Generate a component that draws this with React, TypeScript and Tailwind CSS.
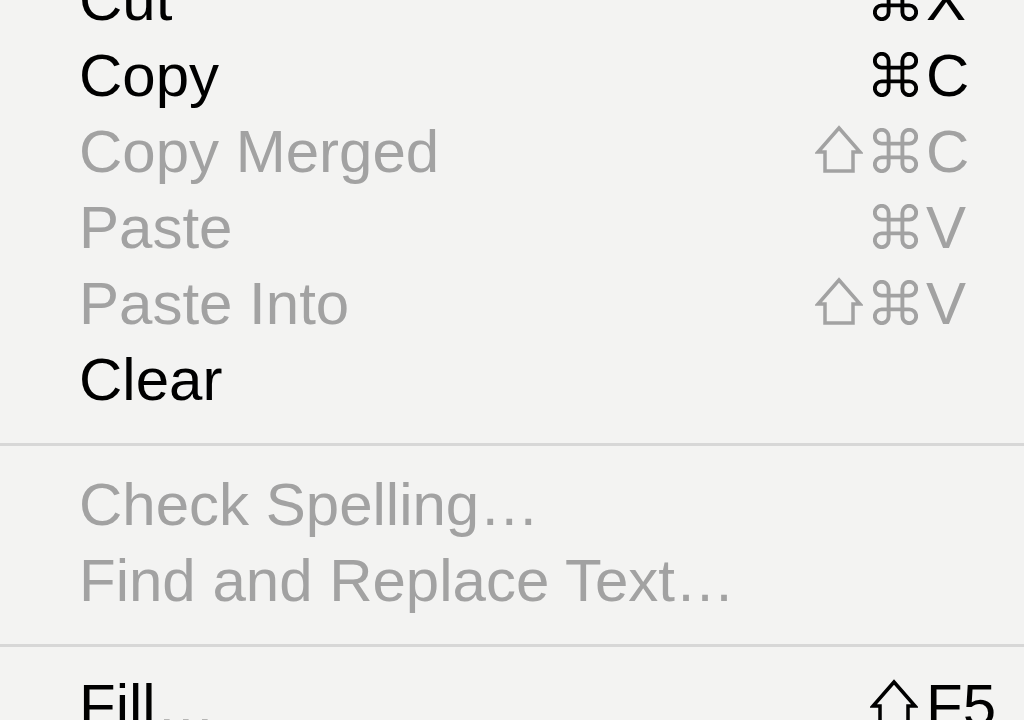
import React from "react";

type Mod = "shift" | "cmd";

type Item = {
  label: string;
  mods?: Mod[];
  shortcut?: string;
  disabled?: boolean;
};

function CmdGlyph() {
  return (
    <svg width="45" height="45" viewBox="2.2 2.2 19.6 19.6" fill="none" stroke="currentColor" strokeWidth="1.7">
      <path d="M15 6v12a3 3 0 1 0 3-3H6a3 3 0 1 0 3 3V6a3 3 0 1 0-3 3h12a3 3 0 1 0-3-3" />
    </svg>
  );
}

function ShiftGlyph() {
  return (
    <svg width="48" height="48" viewBox="0 0 48 48" fill="none" stroke="currentColor" strokeWidth="3.5">
      <path d="M24 3 L45 27 H38 V46 H10 V27 H3 Z" strokeLinejoin="miter" />
    </svg>
  );
}

function MenuRow({ label, mods = [], shortcut, disabled }: Item) {
  return (
    <div className={disabled ? "flex h-[76px] text-[#a2a2a2]" : "flex h-[76px] text-black"}>
      <div className="flex-1 whitespace-nowrap pl-[79px] text-[60px] leading-[76px]">{label}</div>
      <div className="flex w-[118px] items-end justify-end gap-[10px] pb-[17px]">
        {mods.map((m, i) => (m === "shift" ? <ShiftGlyph key={i} /> : <CmdGlyph key={i} />))}
      </div>
      <div className="w-[106px] whitespace-nowrap pl-[8px] text-[60px] leading-[76px]">{shortcut}</div>
    </div>
  );
}

function Separator() {
  return <div className="mt-[25px] mb-[21px] h-[3px] w-full bg-[#d7d7d7]" />;
}

const editItems: Item[] = [
  { label: "Cut", mods: ["cmd"], shortcut: "X" },
  { label: "Copy", mods: ["cmd"], shortcut: "C" },
  { label: "Copy Merged", mods: ["shift", "cmd"], shortcut: "C", disabled: true },
  { label: "Paste", mods: ["cmd"], shortcut: "V", disabled: true },
  { label: "Paste Into", mods: ["shift", "cmd"], shortcut: "V", disabled: true },
  { label: "Clear" },
];

const textItems: Item[] = [
  { label: "Check Spelling…", disabled: true },
  { label: "Find and Replace Text…", disabled: true },
];

export default function App() {
  return (
    <div className="h-[720px] w-full overflow-hidden bg-[#f3f3f2] font-['Liberation_Sans','DejaVu_Sans',sans-serif]">
      <div className="-mt-[38px]">
        {editItems.map((item) => (
          <MenuRow key={item.label} {...item} />
        ))}
        <Separator />
        {textItems.map((item) => (
          <MenuRow key={item.label} {...item} />
        ))}
        <Separator />
        <MenuRow label="Fill…" mods={["shift"]} shortcut="F5" />
      </div>
    </div>
  );
}
